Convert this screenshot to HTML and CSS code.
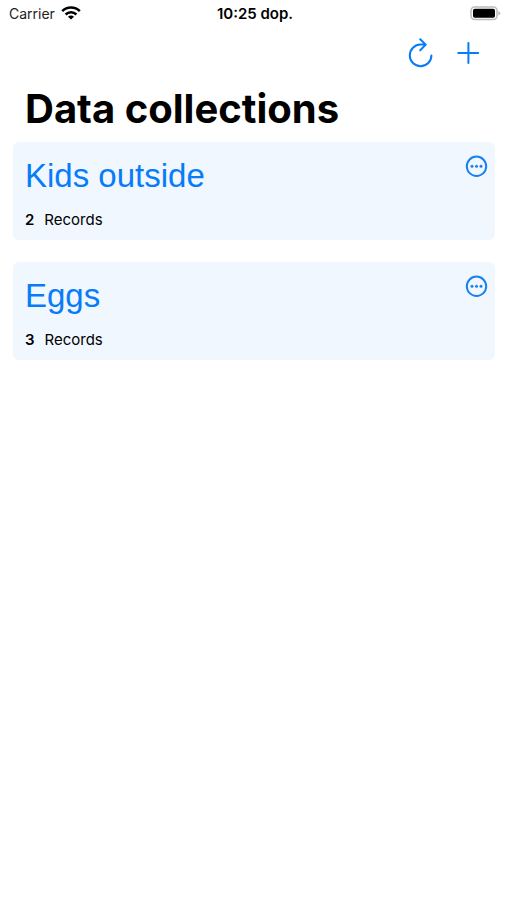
FILE: index.html
```html
<!DOCTYPE html>
<html lang="en">
<head>
<meta charset="utf-8">
<meta name="viewport" content="width=device-width, initial-scale=1">
<title>Data collections</title>
<link rel="stylesheet" href="styles.css">
</head>
<body>
<div class="status">
  <div class="carrier">
    <span>Carrier</span>
    <svg width="20" height="14" viewBox="0 0 20 14" aria-hidden="true"><g fill="none" stroke="#000" stroke-width="2.6"><path d="M1.2 5.2a12.4 12.4 0 0 1 17.6 0"/><path d="M4.6 8.5a7.6 7.6 0 0 1 10.8 0"/></g><path d="M10 13.6 7 10.7a4.2 4.2 0 0 1 6 0z"/></svg>
  </div>
  <time class="clock">10:25 dop.</time>
  <svg class="battery" width="31" height="14" viewBox="0 0 31 14" aria-hidden="true"><rect x="1" y="1" width="26" height="12.4" rx="3.6" fill="#fff" stroke="#bbb" stroke-width="1.5"/><rect x="3" y="2.7" width="22" height="9" rx="1.8"/><path d="M28.3 5q2 .8 2 2.2t-2 2.2z" fill="#bbb"/></svg>
</div>
<nav class="toolbar">
  <button class="icon" aria-label="Refresh"><svg width="26" height="30" viewBox="0 0 26 30" aria-hidden="true"><path d="M18.5 6.6H13.6a10.8 10.8 0 1 0 10.8 10.8M13.2 1.2l5.6 5.4-5.6 5.6"/></svg></button>
  <button class="icon" aria-label="Add"><svg width="22" height="22" viewBox="0 0 22 22" aria-hidden="true"><path d="M11.4 1v20M1.2 11h20"/></svg></button>
</nav>
<main>
  <h1>Data collections</h1>
  <section class="card">
    <h2>Kids outside</h2>
    <p><b>2</b><span>Records</span></p>
    <button class="icon more" aria-label="Options for Kids outside"><svg width="22" height="22" viewBox="0 0 22 22" aria-hidden="true"><circle cx="11.5" cy="11.3" r="9.7"/><g class="dots"><circle cx="7" cy="11.3" r="1.5"/><circle cx="11.5" cy="11.3" r="1.5"/><circle cx="16" cy="11.3" r="1.5"/></g></svg></button>
  </section>
  <section class="card">
    <h2>Eggs</h2>
    <p><b>3</b><span>Records</span></p>
    <button class="icon more" aria-label="Options for Eggs"><svg width="22" height="22" viewBox="0 0 22 22" aria-hidden="true"><circle cx="11.5" cy="11.3" r="9.7"/><g class="dots"><circle cx="7" cy="11.3" r="1.5"/><circle cx="11.5" cy="11.3" r="1.5"/><circle cx="16" cy="11.3" r="1.5"/></g></svg></button>
  </section>
</main>
</body>
</html>
```

FILE: styles.css
```css
* { box-sizing: border-box; }
body { margin: 0; background: #fff; color: #000; font-family: Inter, "Liberation Sans", sans-serif; }
svg { display: block; overflow: visible; }
h1, h2, p { margin: 0; }
.status { display: grid; grid-template-columns: 1fr auto 1fr; align-items: center; height: 26px; padding: 0 6px 0 9px; font-size: 14px; }
.carrier { display: flex; align-items: center; gap: 6px; color: #222; }
.clock { font-size: 15px; font-weight: 600; }
.battery { justify-self: end; }
.toolbar { display: flex; justify-content: flex-end; align-items: center; gap: 24px; height: 54px; padding: 0 28px; }
.icon { padding: 0; border: 0; background: none; cursor: pointer; }
.icon svg { fill: none; stroke: #087cf8; stroke-width: 2; stroke-linecap: round; stroke-linejoin: round; }
main { padding: 5px 12px 0 13px; }
h1 { padding-left: 12px; font-size: 40px; line-height: 48px; font-weight: 700; margin-bottom: 9px; }
.card { position: relative; padding: 12px 12px 10px; margin-bottom: 22px; border-radius: 6px; background: #f0f7ff; }
h2 { color: #087cf8; font-family: "Liberation Sans", Arial, sans-serif; font-size: 33px; line-height: 44px; font-weight: 400; }
.card p { display: flex; gap: 10px; margin-top: 12px; font-size: 15px; line-height: 20px; }
.card b { font-weight: 600; }
.more { position: absolute; top: 13px; right: 8px; }
.more svg { stroke: #1a80f0; }
.dots circle { fill: #1a80f0; stroke: none; }
```
